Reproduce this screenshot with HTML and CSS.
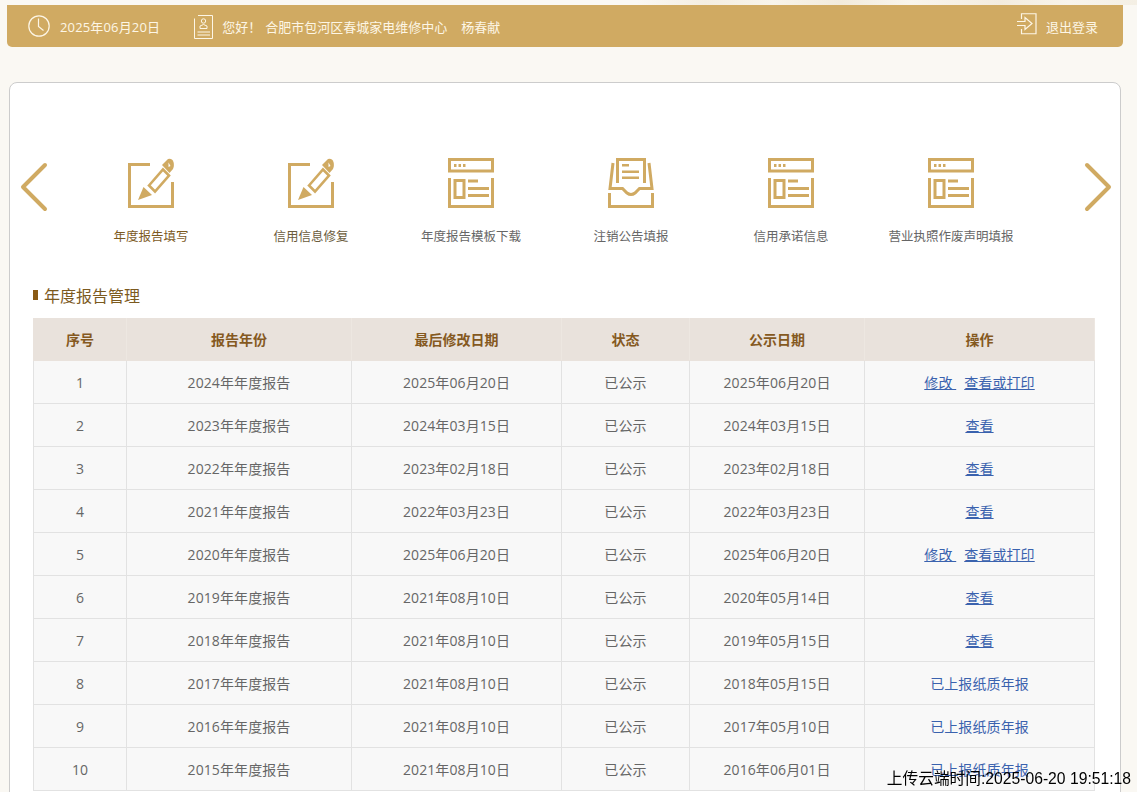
FILE: index.html
```html
<!DOCTYPE html>
<html lang="zh-CN">
<head>
<meta charset="utf-8">
<title>年度报告管理</title>
<link rel="stylesheet" href="styles.css">
</head>
<body>
<svg class="defs" width="0" height="0" aria-hidden="true">
  <symbol id="i-edit" viewBox="0 0 46 50">
    <path d="M22 6.500H1.500V48.500H44.500V24" fill="none" stroke="#d0aa62" stroke-width="3"/>
    <path d="M10 42L15.500 29L24 37Z" fill="#d0aa62"/>
    <path d="M21 27.500L35 11.500L41 17.500L27 33.500Z" fill="none" stroke="#d0aa62" stroke-width="2.600"/>
    <path d="M34 7L40 1Q44 0 45.500 4Q46.500 8 45 11L41.500 15Z" fill="#d0aa62"/>
    <path d="M40.500 4.500L42.500 8L40.500 9Z" fill="#fff"/>
  </symbol>
  <symbol id="i-page" viewBox="0 0 46 50">
    <path d="M0 0H46V14.500H0ZM3 3V11.500H43V3Z M0 20H3V47H43V20H46V50H0Z M5.500 21H17.500V41H5.500ZM8.500 24V38H14.500V24Z M20 21.500H30V24.500H20Z M20 29H41V32H20Z M20 36H41V39H20Z" fill="#d0aa62" fill-rule="evenodd"/>
    <path d="M6 6H8.500V9H6Z M10.500 6H13V9H10.500Z M15 6H17.500V9H15Z" fill="#d0aa62"/>
  </symbol>
  <symbol id="i-inbox" viewBox="0 0 46 50">
    <path d="M9.500 25V1.500H36.500V25" fill="none" stroke="#d0aa62" stroke-width="3"/>
    <path d="M14 6H21V8.500H14Z M14 12.500H31V15H14Z M14 18.500H31V21H14Z" fill="#d0aa62"/>
    <path d="M5 5L2 30.500H14.500L19 35Q23 38 27 35L31.500 30.500H44L41 5" fill="none" stroke="#d0aa62" stroke-width="3"/>
    <path d="M1.500 35V48.500H44.500V35" fill="none" stroke="#d0aa62" stroke-width="3"/>
  </symbol>
</svg>

<header class="topbar">
  <div class="topbar-left">
    <svg class="ico-clock" viewBox="0 0 24 24" aria-hidden="true">
      <circle cx="12" cy="12" r="10.200" fill="none" stroke="#fdf6e6" stroke-width="1.200"/>
      <path d="M11.500 4.500V12.500L16.500 16.500" fill="none" stroke="#fdf6e6" stroke-width="1.200"/>
    </svg>
    <span class="date">2025年06月20日</span>
    <svg class="ico-user" viewBox="0 0 20 24" aria-hidden="true">
      <path d="M4 0.500H18.500V23.500H0.500V3.500" fill="none" stroke="#fdf6e6" stroke-width="1"/>
      <circle cx="9.500" cy="6" r="2.200" fill="none" stroke="#fdf6e6"/>
      <path d="M6 13.500V11Q9.500 8 13 11V13.500Z M3.500 17H16 M3.500 20H16" fill="none" stroke="#fdf6e6"/>
    </svg>
    <span class="greet">您好！</span>
    <span class="company">合肥市包河区春城家电维修中心</span>
    <span class="person">杨春献</span>
  </div>
  <a class="logout">
    <svg class="ico-exit" viewBox="0 0 20 22" aria-hidden="true">
      <path d="M4.500 6V0.750H19V20.750H4.500V16" fill="none" stroke="#fdf6e6" stroke-width="1.200"/>
      <path d="M0 8.500H8V4.500L15 10.500L8 16.500V12.500H0" fill="none" stroke="#fdf6e6" stroke-width="1.200"/>
    </svg>
    <span>退出登录</span>
  </a>
</header>

<main class="card">
  <nav class="quick">
    <svg class="arrow" viewBox="0 0 28 50" aria-hidden="true"><path d="M25 3L3 25L25 47" fill="none" stroke="#d0aa62" stroke-width="4" stroke-linecap="round" stroke-linejoin="round"/></svg>
    <ul class="quick-list">
      <li class="quick-item"><svg class="quick-ico"><use href="#i-edit"/></svg><span class="lbl-brown">年度报告填写</span></li>
      <li class="quick-item"><svg class="quick-ico"><use href="#i-edit"/></svg><span class="lbl-olive">信用信息修复</span></li>
      <li class="quick-item"><svg class="quick-ico"><use href="#i-page"/></svg><span>年度报告模板下载</span></li>
      <li class="quick-item"><svg class="quick-ico"><use href="#i-inbox"/></svg><span>注销公告填报</span></li>
      <li class="quick-item"><svg class="quick-ico"><use href="#i-page"/></svg><span>信用承诺信息</span></li>
      <li class="quick-item"><svg class="quick-ico"><use href="#i-page"/></svg><span>营业执照作废声明填报</span></li>
    </ul>
    <svg class="arrow" viewBox="0 0 28 50" aria-hidden="true"><path d="M3 3L25 25L3 47" fill="none" stroke="#d0aa62" stroke-width="4" stroke-linecap="round" stroke-linejoin="round"/></svg>
  </nav>

  <h2 class="section-title">年度报告管理</h2>

  <table class="reports">
    <colgroup>
      <col class="c1"><col class="c2"><col class="c3"><col class="c4"><col class="c5"><col class="c6">
    </colgroup>
    <thead>
      <tr><th>序号</th><th>报告年份</th><th>最后修改日期</th><th>状态</th><th>公示日期</th><th>操作</th></tr>
    </thead>
    <tbody>
      <tr><td>1</td><td>2024年年度报告</td><td>2025年06月20日</td><td>已公示</td><td>2025年06月20日</td><td><a class="lnk first">修改&nbsp;</a><a class="lnk">查看或打印</a></td></tr>
      <tr><td>2</td><td>2023年年度报告</td><td>2024年03月15日</td><td>已公示</td><td>2024年03月15日</td><td><a class="lnk">查看</a></td></tr>
      <tr><td>3</td><td>2022年年度报告</td><td>2023年02月18日</td><td>已公示</td><td>2023年02月18日</td><td><a class="lnk">查看</a></td></tr>
      <tr><td>4</td><td>2021年年度报告</td><td>2022年03月23日</td><td>已公示</td><td>2022年03月23日</td><td><a class="lnk">查看</a></td></tr>
      <tr><td>5</td><td>2020年年度报告</td><td>2025年06月20日</td><td>已公示</td><td>2025年06月20日</td><td><a class="lnk first">修改&nbsp;</a><a class="lnk">查看或打印</a></td></tr>
      <tr><td>6</td><td>2019年年度报告</td><td>2021年08月10日</td><td>已公示</td><td>2020年05月14日</td><td><a class="lnk">查看</a></td></tr>
      <tr><td>7</td><td>2018年年度报告</td><td>2021年08月10日</td><td>已公示</td><td>2019年05月15日</td><td><a class="lnk">查看</a></td></tr>
      <tr><td>8</td><td>2017年年度报告</td><td>2021年08月10日</td><td>已公示</td><td>2018年05月15日</td><td><span class="paper">已上报纸质年报</span></td></tr>
      <tr><td>9</td><td>2016年年度报告</td><td>2021年08月10日</td><td>已公示</td><td>2017年05月10日</td><td><span class="paper">已上报纸质年报</span></td></tr>
      <tr><td>10</td><td>2015年年度报告</td><td>2021年08月10日</td><td>已公示</td><td>2016年06月01日</td><td><span class="paper">已上报纸质年报</span></td></tr>
    </tbody>
  </table>
</main>

<div class="stamp">上传云端时间:2025-06-20 19:51:18</div>
</body>
</html>
```
FILE: styles.css
```css
* { box-sizing: border-box; }
html, body { height: 792px; overflow: hidden; }
body {
  margin: 0;
  padding: 5px 14px 0 7px;
  background-color: #faf8f3;
  background-image: linear-gradient(90deg, #faf8f3 0 56%, #f4eee2 62%, #f8f4ea 68%, #f2ebdc 74%, #f9f5ec 80%, #f3ecdf 88%, #f8f4eb 94%, #f4efe4 100%);
  background-size: 100% 5px;
  background-repeat: no-repeat;
  font-family: "Open Sans", "Noto Sans CJK SC", sans-serif;
  font-size: 13px;
  color: #666;
}
.defs { position: absolute; }
.topbar {
  height: 42px;
  background: #d0aa62;
  border-radius: 0 0 5px 5px;
  color: #fdf6e6;
  display: flex;
  align-items: center;
  justify-content: space-between;
  padding: 0 25px 0 20px;
}
.topbar-left { display: flex; align-items: center; }
.ico-clock { width: 24px; height: 24px; margin-top: -1px; margin-right: 9px; }
.date { letter-spacing: 0.150px; }
.ico-user { width: 20px; height: 24px; margin-left: 34px; margin-top: 1px; margin-right: 8px; }
.greet { margin-right: 4px; }
.company { margin-right: 14px; }
.logout { display: flex; align-items: center; gap: 9px; }
.ico-exit { width: 20px; height: 22px; margin-top: -4px; }
.card {
  margin: 35px 2px 0 2px;
  height: 800px;
  background: #fff;
  border: 1px solid #ccc;
  border-radius: 8px;
  padding: 0 25px 0 23px;
}
.quick {
  display: flex;
  align-items: flex-start;
  margin: 0 -17px 0 -13px;
  padding-top: 75px;
  height: 184px;
}
.arrow { width: 28px; height: 50px; flex: none; margin-top: 4px; }
.quick-list {
  list-style: none;
  margin: 0;
  padding: 0 0 0 23px;
  display: flex;
  flex: 1;
}
.quick-item {
  width: 160px;
  flex: none;
  display: flex;
  flex-direction: column;
  align-items: center;
  gap: 18px;
  white-space: nowrap;
  font-size: 12.500px;
}
.quick-ico { width: 46px; height: 50px; }
.lbl-brown { color: #7c5a1e; }
.lbl-olive { color: #6b5c3c; }
.section-title {
  margin: 17px 0 12px;
  padding-left: 11px;
  font-size: 16px;
  font-weight: 400;
  line-height: 24px;
  height: 22px;
  color: #7c5a1e;
  position: relative;
}
.section-title::before {
  content: "";
  position: absolute;
  left: 0;
  top: 6px;
  width: 5px;
  height: 10px;
  background: #8a5a14;
}
.reports {
  width: 1061px;
  table-layout: fixed;
  border-collapse: collapse;
  font-size: 14px;
}
.c1 { width: 93px; }
.c2 { width: 225px; }
.c3 { width: 210px; }
.c4 { width: 128px; }
.c5 { width: 175px; }
.c6 { width: 230px; }
.reports th {
  height: 42px;
  padding: 0 0 2px;
  background: #e9e2dc;
  color: #85591f;
  font-weight: 700;
  border: 1px solid #e9e2dc;
  border-right-color: #ede7e1;
}
.reports td {
  height: 43px;
  padding: 0;
  background: #f8f8f8;
  border: 1px solid #e2e2e2;
  text-align: center;
  color: #666;
  letter-spacing: 0.100px;
}
.lnk { color: #3a62ae; text-decoration: underline; }
.lnk.first { margin-right: 8px; }
.paper { color: #3a62ae; }
.stamp {
  position: fixed;
  right: 6px;
  bottom: 3px;
  font-family: "Liberation Sans", "Noto Sans CJK SC", sans-serif;
  font-size: 15.700px;
  line-height: 20px;
  color: #000;
  white-space: nowrap;
}
```
